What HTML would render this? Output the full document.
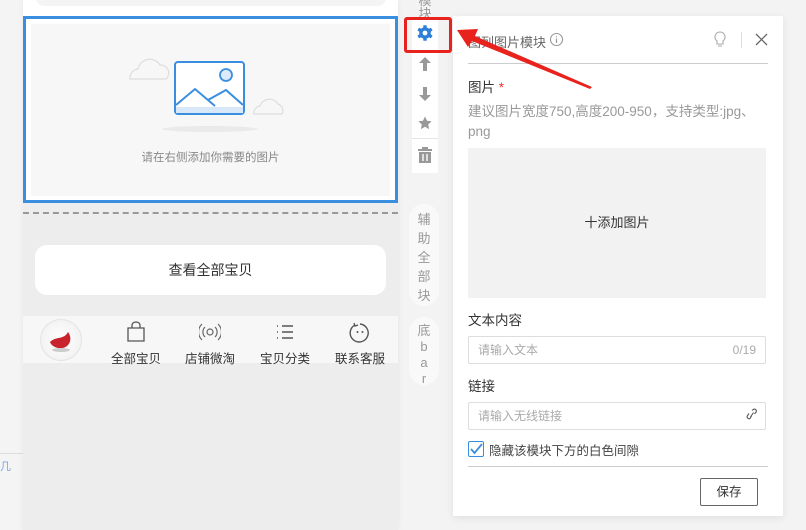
<!DOCTYPE html>
<html><head><meta charset="utf-8"><style>
*{margin:0;padding:0;box-sizing:border-box}
body{width:806px;height:530px;overflow:hidden;background:#f3f3f3;position:relative;font-family:"Liberation Sans","Noto Sans CJK SC",sans-serif;}
.abs{position:absolute}
</style></head><body>
<div class="abs" style="left:0;top:0;width:23px;height:530px;background:#f4f4f4"></div>
<div class="abs" style="left:0;top:453px;width:23px;height:1px;background:#ddd"></div>
<div class="abs" style="left:0;top:458px;font-size:11px;color:#7aa7e0">几</div>
<div class="abs" style="left:23px;top:0;width:375px;height:530px;background:#ededed;box-shadow:0 0 6px rgba(0,0,0,.06)"></div>
<div class="abs" style="left:23px;top:0;width:375px;height:16px;background:#fff"></div>
<div class="abs" style="left:36px;top:-10px;width:350px;height:16px;background:#f4f4f4;border-radius:8px"></div>
<div class="abs" style="left:23px;top:16px;width:375px;height:187px;border:3px solid #3a8ee0;background:#fff"></div>
<div class="abs" style="left:31px;top:24px;width:359px;height:172px;background:#f7f7f7"></div>
<svg class="abs" style="left:120px;top:45px" width="170" height="90" viewBox="0 0 170 90">
<path d="M10 34 a9 9 0 0 1 8-10 a12 12 0 0 1 22-4 a8 8 0 0 1 6 14 z" fill="none" stroke="#ddd" stroke-width="1.2"/>
<path d="M134 69 a7 7 0 0 1 6-8 a10 10 0 0 1 18-2 a7 7 0 0 1 4 10 z" fill="none" stroke="#ddd" stroke-width="1.2"/>
<rect x="55" y="17" width="69" height="52" rx="3" fill="#fff" stroke="#3a8ee0" stroke-width="2"/>
<rect x="56" y="62" width="67" height="6" fill="#d8e8f8"/>
<circle cx="106" cy="30" r="6" fill="#ddeafa" stroke="#3a8ee0" stroke-width="1.8"/>
<path d="M56 60 L75 44 L95 61 M88 55 L106 45 L123 60" fill="none" stroke="#3a8ee0" stroke-width="2"/>
<ellipse cx="90" cy="84" rx="48" ry="3" fill="#eaeaea"/>
</svg>
<div class="abs" style="left:31px;width:359px;top:149px;text-align:center;font-size:11.5px;color:#888">请在右侧添加你需要的图片</div>
<div class="abs" style="left:23px;top:212px;width:375px;border-top:2px dashed #999"></div>
<div class="abs" style="left:35px;top:245px;width:351px;height:50px;background:#fff;border-radius:12px;text-align:center;line-height:50px;font-size:14px;color:#333">查看全部宝贝</div>
<div class="abs" style="left:23px;top:316px;width:375px;height:47px;background:#f7f7f7"></div>
<div class="abs" style="left:40px;top:319px;width:42px;height:42px;border-radius:50%;background:radial-gradient(circle at 50% 50%,#fff,#eee);border:1px solid #e3e3e3"></div>
<svg class="abs" style="left:46px;top:326px" width="30" height="28"><path d="M4 16 C10 10 18 14 22 6 C28 14 22 24 12 22 C8 21 5 19 4 16z" fill="#c8232c"/><ellipse cx="15" cy="24" rx="9" ry="2" fill="#ccc"/></svg>
<div class="abs" style="left:101px;top:321px;width:70px;text-align:center">
<svg width="22" height="22" viewBox="0 0 22 22"><path d="M3 7h16v13H3z M7 7V4a4 3 0 0 1 8 0v3" fill="none" stroke="#555" stroke-width="1.3"/></svg>
<div style="font-size:12.5px;color:#333">全部宝贝</div></div>
<div class="abs" style="left:175px;top:321px;width:70px;text-align:center">
<svg width="22" height="22" viewBox="0 0 22 22"><circle cx="11" cy="11" r="3" fill="none" stroke="#666" stroke-width="1.2"/><path d="M6 6a7 7 0 0 0 0 10M16 6a7 7 0 0 1 0 10M3 3a11 11 0 0 0 0 16M19 3a11 11 0 0 1 0 16" fill="none" stroke="#666" stroke-width="1.2"/></svg>
<div style="font-size:12.5px;color:#333">店铺微淘</div></div>
<div class="abs" style="left:250px;top:321px;width:70px;text-align:center">
<svg width="22" height="22" viewBox="0 0 22 22"><path d="M3 5h1M3 11h1M3 17h1M8 5h11M8 11h11M8 17h11" stroke="#555" stroke-width="1.5"/></svg>
<div style="font-size:12.5px;color:#333">宝贝分类</div></div>
<div class="abs" style="left:325px;top:321px;width:70px;text-align:center">
<svg width="22" height="22" viewBox="0 0 22 22"><path d="M6 4a9 9 0 1 0 5-1" fill="none" stroke="#555" stroke-width="1.4"/><path d="M5 2l1 3 3-1" fill="none" stroke="#555" stroke-width="1.3"/><circle cx="8.5" cy="11" r="1" fill="#555"/><circle cx="13.5" cy="11" r="1" fill="#555"/></svg>
<div style="font-size:12.5px;color:#333">联系客服</div></div>
<!-- side toolbar -->
<div class="abs" style="left:412px;top:-6px;width:26px;height:24px;font-size:13px;color:#999;text-align:center;line-height:13px">模<br>块</div>
<div class="abs" style="left:412px;top:18px;width:26px;height:155px;background:#fff"></div>
<svg class="abs" style="left:416px;top:24px" width="18" height="18" viewBox="0 0 18 18">
<g fill="#2f7fd8"><circle cx="9" cy="9" r="5.8"/>
<rect x="7.3" y="1.2" width="3.4" height="3.5" rx=".6"/><rect x="7.3" y="13.3" width="3.4" height="3.5" rx=".6"/>
<rect x="7.3" y="1.2" width="3.4" height="3.5" rx=".6" transform="rotate(60 9 9)"/><rect x="7.3" y="1.2" width="3.4" height="3.5" rx=".6" transform="rotate(120 9 9)"/>
<rect x="7.3" y="1.2" width="3.4" height="3.5" rx=".6" transform="rotate(240 9 9)"/><rect x="7.3" y="1.2" width="3.4" height="3.5" rx=".6" transform="rotate(300 9 9)"/></g>
<circle cx="9" cy="9" r="2.4" fill="#fff"/></svg>
<svg class="abs" style="left:417px;top:56px" width="16" height="16" viewBox="0 0 16 16"><path d="M8 1l6 6h-4v8H6V7H2z" fill="#999"/></svg>
<svg class="abs" style="left:417px;top:86px" width="16" height="16" viewBox="0 0 16 16"><path d="M8 15l6-6h-4V1H6v8H2z" fill="#999"/></svg>
<svg class="abs" style="left:417px;top:115px" width="16" height="16" viewBox="0 0 16 16"><path d="M8 1.5l2 4.3 4.6.5-3.4 3.2.9 4.6L8 11.8 3.9 14.1l.9-4.6L1.4 6.3 6 5.8z" fill="#999"/></svg>
<div class="abs" style="left:412px;top:138px;width:26px;height:1px;background:#e5e5e5"></div>
<svg class="abs" style="left:417px;top:146px" width="16" height="18" viewBox="0 0 16 18"><path d="M1 3h14v2H1zM5 1h6v2H5zM2 6h12v11H2z" fill="#999"/><path d="M6 8v7M10 8v7" stroke="#fff" stroke-width="1.4"/></svg>
<div class="abs" style="left:409px;top:204px;width:30px;height:102px;background:#f9f9f9;border-radius:15px;font-size:13px;color:#999;text-align:center;line-height:19px;padding-top:6px">辅<br>助<br>全<br>部<br>块</div>
<div class="abs" style="left:409px;top:317px;width:30px;height:68px;background:#f9f9f9;border-radius:15px;font-size:13px;color:#999;text-align:center;line-height:16px;padding-top:6px">底<br>b<br>a<br>r</div>
<!-- panel -->
<div class="abs" style="left:453px;top:16px;width:330px;height:500px;background:#fff;box-shadow:0 2px 8px rgba(0,0,0,.08)"></div>
<div class="abs" style="left:468px;top:32px;font-size:13px;color:#666">图列图片模块</div>
<svg class="abs" style="left:549px;top:32px" width="15" height="15"><circle cx="7.5" cy="7.5" r="6" fill="none" stroke="#999" stroke-width="1.1"/><path d="M7.5 6.5v4.5M7.5 4.2v1" stroke="#999" stroke-width="1.2"/></svg>
<svg class="abs" style="left:713px;top:31px" width="14" height="16"><path d="M7 1a5 5 0 0 0-3 9v3h6v-3a5 5 0 0 0-3-9z" fill="none" stroke="#aaa" stroke-width="1.1"/><path d="M5 15h4" stroke="#aaa"/></svg>
<div class="abs" style="left:741px;top:32px;width:1px;height:16px;background:#ddd"></div>
<svg class="abs" style="left:755px;top:33px" width="13" height="13"><path d="M1 1l11 11M12 1L1 12" stroke="#666" stroke-width="1.3"/></svg>
<div class="abs" style="left:468px;top:63px;width:300px;height:1px;background:#ccc"></div>
<div class="abs" style="left:468px;top:76px;font-size:13.5px;color:#333">图片 <span style="color:#e33">*</span></div>
<div class="abs" style="left:468px;top:102px;width:310px;font-size:13.5px;color:#999;line-height:20px;white-space:nowrap">建议图片宽度750,高度200-950，支持类型:jpg、<br>png</div>
<div class="abs" style="left:468px;top:148px;width:298px;height:150px;background:#f2f2f2;text-align:center;line-height:150px;font-size:13px;color:#333">十添加图片</div>
<div class="abs" style="left:468px;top:309px;font-size:13.5px;color:#333">文本内容</div>
<div class="abs" style="left:468px;top:336px;width:298px;height:28px;border:1px solid #ddd;border-radius:2px;font-size:12px;color:#aaa;line-height:26px;padding:0 9px">请输入文本<span style="float:right">0/19</span></div>
<div class="abs" style="left:468px;top:375px;font-size:13.5px;color:#333">链接</div>
<div class="abs" style="left:468px;top:402px;width:298px;height:28px;border:1px solid #ddd;border-radius:2px;font-size:12px;color:#aaa;line-height:26px;padding:0 9px">请输入无线链接</div>
<svg class="abs" style="left:746px;top:408px" width="12" height="14" viewBox="0 0 12 14"><path d="M6 2.5l1.5-1.2a2 2 0 0 1 2.6 2.8L8.5 6M5.5 8L4 10.5a2 2 0 0 1-2.8-2.4L3 5.5M4.5 9L7.5 4.5" fill="none" stroke="#555" stroke-width="1.1"/></svg>
<div class="abs" style="left:468px;top:441px;width:16px;height:16px;border:1px solid #3a8ee0;border-radius:2px"></div>
<svg class="abs" style="left:470px;top:443px" width="13" height="12"><path d="M1 6l3.5 4L12 1" fill="none" stroke="#3a8ee0" stroke-width="1.8"/></svg>
<div class="abs" style="left:489px;top:440px;font-size:12.5px;color:#444">隐藏该模块下方的白色间隙</div>
<div class="abs" style="left:468px;top:466px;width:300px;height:1px;background:#ccc"></div>
<div class="abs" style="left:700px;top:478px;width:58px;height:28px;border:1px solid #666;border-radius:2px;text-align:center;line-height:26px;font-size:12.5px;color:#333">保存</div>
<!-- red annotations -->
<div class="abs" style="left:404px;top:17px;width:48px;height:36px;border:3px solid #e8221c;border-radius:3px"></div>
<svg class="abs" style="left:0;top:0" width="806" height="530"><path d="M457 30 L478 29 L475 36 L592 87 L590 89 L472 41 L468 47 Z" fill="#e8221c"/></svg>
</body></html>
